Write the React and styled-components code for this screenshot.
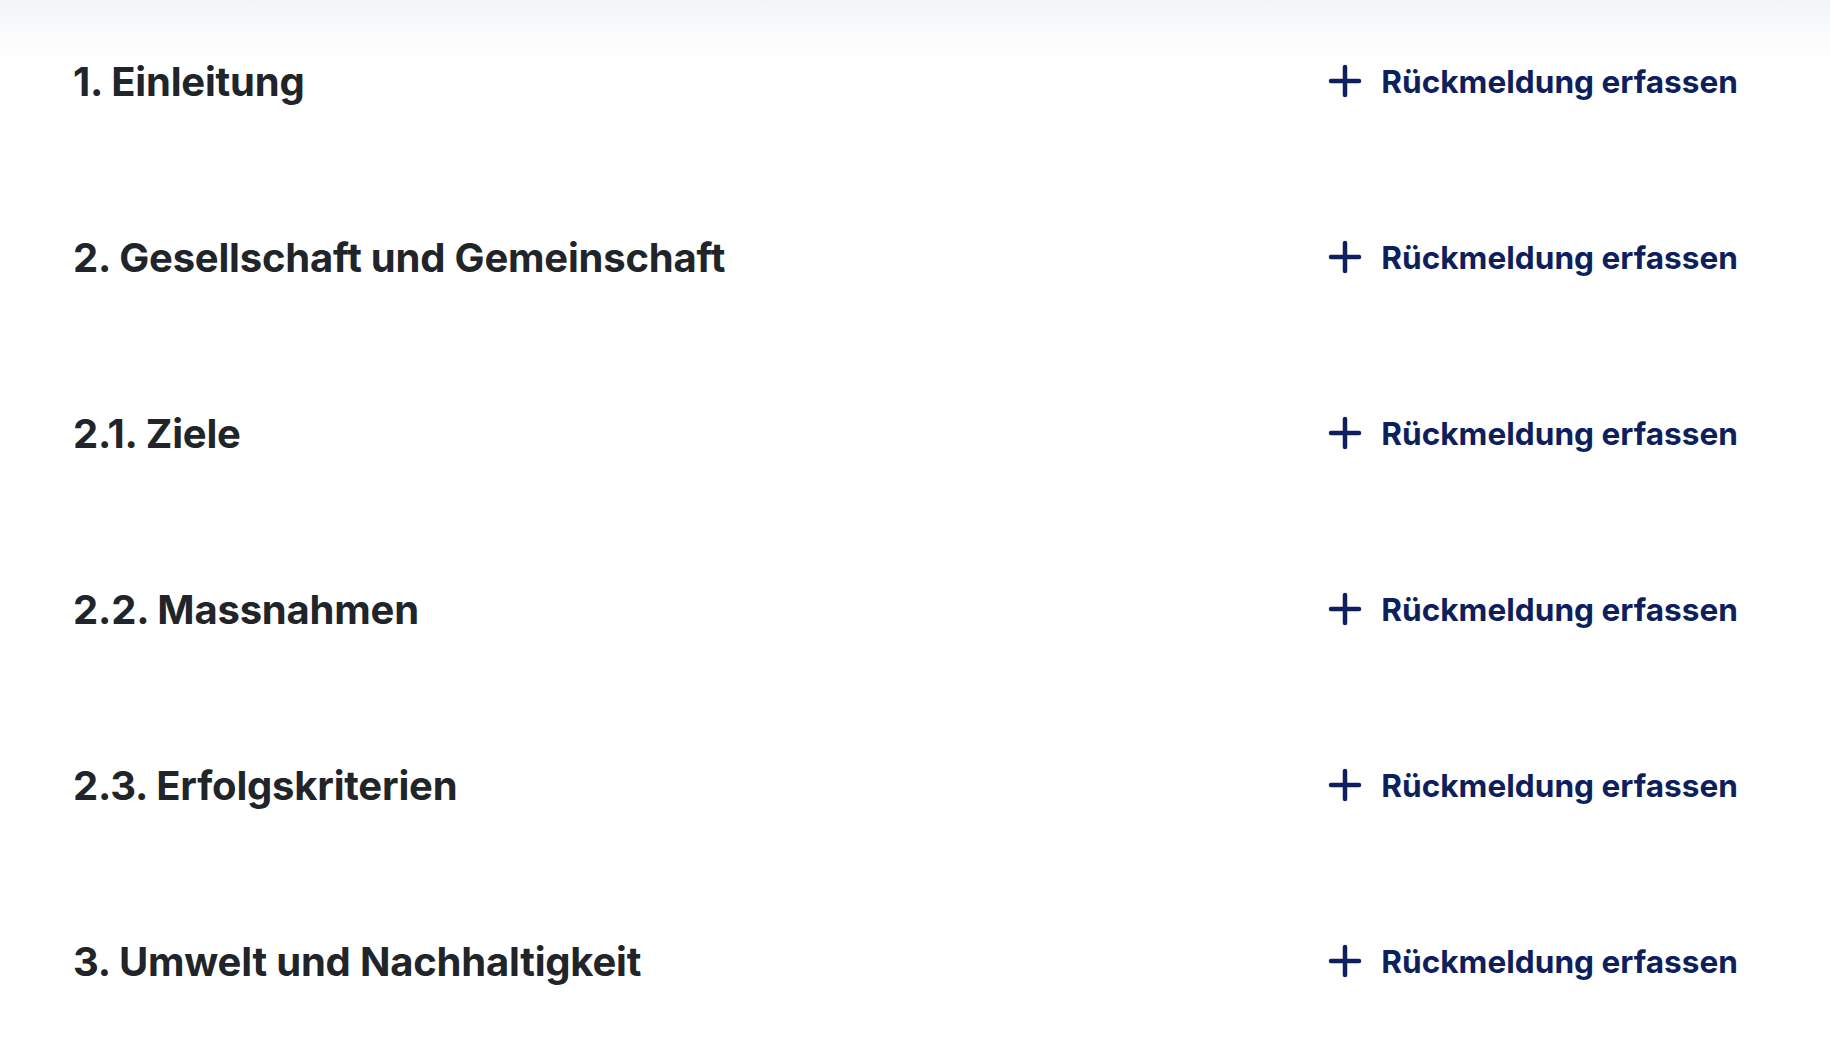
import React from "react";
import styled, { createGlobalStyle } from "styled-components";

const GlobalStyle = createGlobalStyle`
  html, body {
    margin: 0;
    padding: 0;
    background: #ffffff;
  }
  body {
    font-family: Inter, "Noto Sans", sans-serif;
  }
`;

const COLORS = {
  text: "#212429",
  action: "#0f1f5c",
};

const sections = [
  "1. Einleitung",
  "2. Gesellschaft und Gemeinschaft",
  "2.1. Ziele",
  "2.2. Massnahmen",
  "2.3. Erfolgskriterien",
  "3. Umwelt und Nachhaltigkeit",
];

const PlusIcon = () => (
  <svg width="34" height="34" viewBox="0 0 34 34" fill="none">
    <path
      d="M17 3v28M3 17h28"
      stroke="currentColor"
      strokeWidth="4.5"
      strokeLinecap="round"
    />
  </svg>
);

const App = () => {
  return (
    <>
      <GlobalStyle />
      <Page>
        <List>
          {sections.map((title) => (
            <Row key={title}>
              <SectionTitle>{title}</SectionTitle>
              <FeedbackButton type="button">
                <PlusIcon />
                <span>Rückmeldung erfassen</span>
              </FeedbackButton>
            </Row>
          ))}
        </List>
      </Page>
    </>
  );
};
export default App;

const Page = styled.main`
  min-height: 1038px;
  background: linear-gradient(
    to bottom,
    #f3f4f6 0px,
    #f9fafb 28px,
    #ffffff 62px
  );
`;

const List = styled.div`
  display: flex;
  flex-direction: column;
  gap: 116px;
  padding: 51px 92px 0 73px;
`;

const Row = styled.div`
  display: flex;
  align-items: center;
  justify-content: space-between;
  height: 60px;
`;

const SectionTitle = styled.h2`
  margin: 0;
  font-family: Inter, "Noto Sans", sans-serif;
  font-size: 40px;
  font-weight: 700;
  letter-spacing: -0.005em;
  color: ${COLORS.text};
`;

const FeedbackButton = styled.button`
  display: flex;
  align-items: center;
  gap: 19px;
  padding: 0;
  border: 0;
  background: none;
  cursor: pointer;
  font-family: Inter, "Noto Sans", sans-serif;
  font-size: 31.6px;
  font-weight: 700;
  color: ${COLORS.action};
`;
